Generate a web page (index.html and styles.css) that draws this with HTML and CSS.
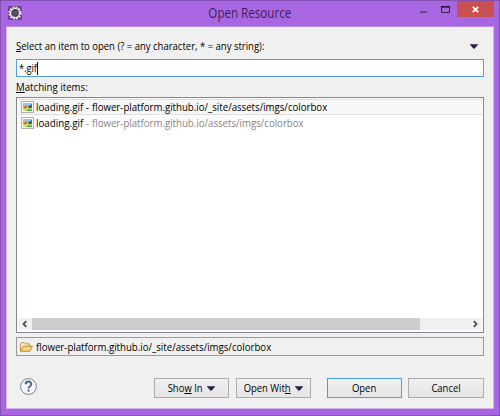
FILE: index.html
```html
<!DOCTYPE html>
<html lang="en">
<head>
<meta charset="utf-8">
<title>Open Resource</title>
<link rel="stylesheet" href="styles.css">
</head>
<body>
<svg width="0" height="0" class="defs">
  <symbol id="picture" viewBox="0 0 13 12">
    <rect x=".5" y=".5" width="12" height="11" fill="#fff" stroke="#b0b0a6"/>
    <rect x="2" y="2" width="9" height="8" fill="#8cc4f2"/>
    <path d="M2 5.5h9V10H2z" fill="#cbe86a"/>
    <path d="M5 10 7 8l2 .6 2-.6v2z" fill="#5cae50"/>
    <path d="M2.3 4.3h3l1 2-1.6 1.4L2.3 6.6z" fill="#e0542e"/>
    <circle cx="3.4" cy="4.7" r="1.1" fill="#f6bd3b"/>
    <path d="M11 3v3.6L9 7.4 7 6.2 8.4 4.8z" fill="#2c7840"/>
    <path d="M7 5h2v1.3H7z" fill="#31579e"/>
  </symbol>
  <symbol id="down" viewBox="0 0 8 5"><path d="M0 .2h8v.6L4.4 4.8h-.8L0 .8z" fill="#2c1b48"/></symbol>
</svg>
<div class="window">
  <header class="titlebar">
    <svg class="app" width="14" height="14" viewBox="0 0 14 14">
      <rect width="14" height="14" rx="1.5" fill="#65458b"/>
      <circle cx="7" cy="7" r="5.7" fill="none" stroke="#f3f0e6" stroke-width="1.8" stroke-dasharray="1.7 1.28"/>
      <circle cx="7" cy="7" r="4.6" fill="#4b405f" stroke="#eeeade" stroke-width="1.3"/>
      <path d="M3.3 6h7.4M3.3 8h7.4" stroke="#7b6e8d" stroke-width=".7"/>
    </svg>
    <h1><span class="t-title">Open Resource</span></h1>
    <div class="controls">
      <svg width="7" height="14" viewBox="0 0 7 14"><path d="M0 9.2h7" stroke="#5b3876" stroke-width="1.5"/></svg>
      <svg width="9" height="14" viewBox="0 0 9 14"><path d="M.5 3.5h8v6h-8z" fill="none" stroke="#39214d"/><path d="M0 3.8h9" stroke="#271635" stroke-width="1.6"/></svg>
      <span class="close"><svg width="7" height="7" viewBox="0 0 7 7"><path d="m.8.8 5.4 5.4M6.2.8.8 6.2" stroke="#fff" stroke-width="1.7"/></svg></span>
    </div>
  </header>
  <main class="content">
    <div class="prompt"><span class="text t-prompt"><u>S</u>elect an item to open (? = any character, * = any string):</span>
      <svg width="8" height="5"><use href="#down"/></svg></div>
    <div class="field"><span class="text t-field">*.gif</span><i class="caret"></i></div>
    <div class="label"><span class="text t-label"><u>M</u>atching items:</span></div>
    <div class="list">
      <div class="row selected"><svg width="13" height="12"><use href="#picture"/></svg><span class="text t-file">loading.gif -</span><span class="text t-path">flower-platform.github.io/_site/assets/imgs/colorbox</span></div>
      <div class="row"><svg width="13" height="12"><use href="#picture"/></svg><span class="text t-file">loading.gif <em>-</em></span><span class="text t-path"><em>flower-platform.github.io/assets/imgs/colorbox</em></span></div>
      <div class="scroll">
        <svg width="14" height="12" viewBox="0 0 14 12"><path d="M8.3 3.2 5.5 6l2.8 2.8" fill="none" stroke="#484848" stroke-width="1.7"/></svg>
        <i class="thumb"></i>
        <svg class="right" width="14" height="12" viewBox="0 0 14 12"><path d="M5.8 3.2 8.6 6 5.8 8.8" fill="none" stroke="#484848" stroke-width="1.7"/></svg>
      </div>
    </div>
    <div class="status">
      <svg width="13" height="10" viewBox="0 0 13 10"><path d="M.6 9.2V2l1-1.3h2.8l1 1.2h4v2" fill="#fff3ca" stroke="#c58a32"/><path d="M.8 9.3 3.5 4.2h8.9L9.7 9.3z" fill="#fbd584" stroke="#c58a32" stroke-linejoin="round"/></svg>
      <span class="text t-path">flower-platform.github.io/_site/assets/imgs/colorbox</span>
    </div>
    <footer class="actions">
      <svg class="help" width="17" height="17" viewBox="0 0 17 17"><circle cx="8.5" cy="8.5" r="7.9" fill="#f7f8fb" stroke="#70819b"/><path d="M5.6 6.2C5.6 2.6 11.4 2.8 11.4 6c0 2.1-2.8 2.2-2.8 4.5" fill="none" stroke="#485f83" stroke-width="1.9"/><rect x="7.6" y="11.6" width="2" height="2" fill="#485f83"/></svg>
      <button><span class="t-show">Sho<u>w</u> In</span><svg width="8" height="5"><use href="#down"/></svg></button>
      <button><span class="t-with">Open Wit<u>h</u></span><svg width="8" height="5"><use href="#down"/></svg></button>
      <button class="primary"><span class="t-button">Open</span></button>
      <button class="cancel"><span class="t-button">Cancel</span></button>
    </footer>
  </main>
</div>
</body>
</html>
```
FILE: styles.css
```css
* { box-sizing: border-box; }
body { margin: 0; font: 11px/16px "Open Sans", "Noto Sans", sans-serif; color: #000; }
.defs { position: absolute; }
svg { display: block; flex: none; }
span { display: inline-block; white-space: nowrap; }
u { text-decoration: underline; text-underline-offset: 1px; text-decoration-thickness: 1px; text-decoration-skip-ink: none; }
.text { transform-origin: left center; }
.t-title { transform: scaleX(.8); }
.t-prompt { transform: scaleX(.864); }
.t-field { transform: scaleX(.84); }
.t-label { transform: scaleX(.88); }
.t-file { width: 54px; transform: scaleX(.89); }
.t-path { transform: scaleX(.876); }
.t-button { transform: scaleX(.86); }
.t-show { transform: scaleX(.86); transform-origin: right center; margin-left: -6px; }
.t-with { transform: scaleX(.86); transform-origin: right center; margin-left: -8px; }
.window { width: 500px; height: 416px; background: #a966e3; border: 1px solid #8650b3; padding: 0 5px 6px; display: flex; flex-direction: column; }
.titlebar { height: 25px; display: grid; grid-template-columns: 77px 1fr 77px; align-items: start; }
.app { margin: 5px 0 0 2px; }
h1 { margin: 2px 0 0; text-align: center; font-size: 14.5px; line-height: 20px; font-weight: 400; color: #3b2152; }
.controls { display: flex; justify-content: flex-end; align-items: flex-start; }
.controls > svg { margin: 2px 14px 0 0; }
.controls > svg + svg { margin-right: 7px; }
.close { width: 37px; height: 16px; background: #c75050; display: flex; align-items: center; justify-content: center; }
.content { flex: 1; background: #f0f0f0; border: 1px solid #d3b4ea; border-top-color: #b789df; padding: 11px 9px 9px; display: flex; flex-direction: column; }
.prompt { height: 21px; display: flex; justify-content: space-between; align-items: flex-start; }
.prompt svg { margin: 6px 6px 0 0; }
.field { height: 18px; border: 1px solid #569de5; background: #fff; display: flex; align-items: center; padding-left: 2px; }
.caret { width: 1px; height: 13px; background: #111; margin-left: -3px; }
.label { height: 20px; padding-top: 2px; }
.list { height: 236px; border: 1px solid #828790; background: #fff; padding: 1px; display: flex; flex-direction: column; }
.row { height: 16px; display: flex; align-items: center; gap: 2px; padding-left: 3px; }
.row.selected { background: #f7f7f7; border: solid #dedede; border-width: 1px 0; }
em { font-style: normal; color: #858585; }
.scroll { height: 12px; margin: auto 0 1px; background: #f0f0f0; display: flex; align-items: center; }
.thumb { width: 388px; height: 12px; background: #cdcdcd; }
.right { margin-left: auto; }
.status { height: 19px; margin-top: 4px; border: 1px solid #9a9a9a; display: flex; align-items: center; gap: 3px; padding-left: 3px; }
.actions { margin-top: 22px; display: flex; align-items: center; height: 20px; }
.help { margin: -3px auto 0 4px; }
button { width: 75px; height: 20px; margin: 0 0 0 7px; padding: 0; border: 1px solid #acacac; background: linear-gradient(#f0f0f0, #e5e5e5); font: inherit; color: inherit; display: flex; align-items: center; justify-content: center; gap: 4px; }
.primary { margin-left: 16px; border-color: #4b9be8; }
.cancel { margin-left: 6px; width: 76px; }
```
